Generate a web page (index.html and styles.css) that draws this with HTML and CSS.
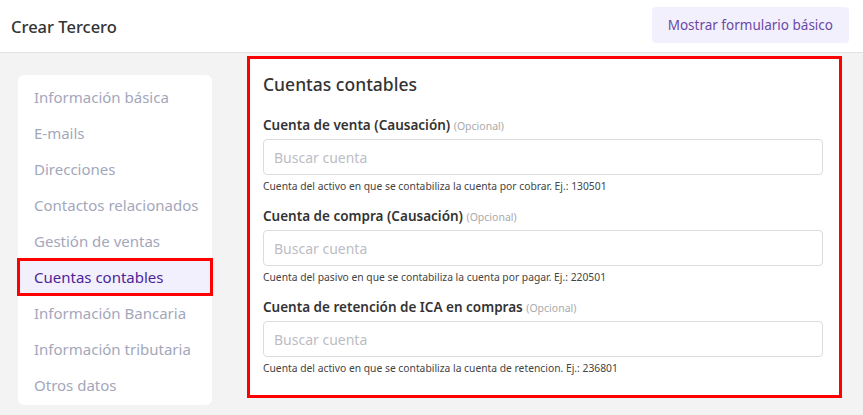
FILE: index.html
```html
<!DOCTYPE html>
<html lang="es">
<head>
    <meta charset="UTF-8">
    <title>Crear Tercero</title>
    <link rel="stylesheet" href="styles.css">
</head>
<body>
<div class="top">
    <h1 class="title">Crear Tercero</h1>
    <button class="btn-basic" type="button">Mostrar formulario básico</button>
</div>
<div class="main">
    <ul class="side">
        <li class="side-item">Información básica</li>
        <li class="side-item">E-mails</li>
        <li class="side-item">Direcciones</li>
        <li class="side-item">Contactos relacionados</li>
        <li class="side-item">Gestión de ventas</li>
        <li class="side-item active">Cuentas contables</li>
        <li class="side-item">Información Bancaria</li>
        <li class="side-item">Información tributaria</li>
        <li class="side-item">Otros datos</li>
    </ul>
    <div class="panel">
        <h2 class="panel-title">Cuentas contables</h2>

        <div class="field">
            <label class="field-label">Cuenta de venta (Causación) <span class="opt">(Opcional)</span></label>
            <input class="field-input" type="text" placeholder="Buscar cuenta">
            <div class="field-help">Cuenta del activo en que se contabiliza la cuenta por cobrar. Ej.: 130501</div>
        </div>

        <div class="field">
            <label class="field-label">Cuenta de compra (Causación) <span class="opt">(Opcional)</span></label>
            <input class="field-input" type="text" placeholder="Buscar cuenta">
            <div class="field-help">Cuenta del pasivo en que se contabiliza la cuenta por pagar. Ej.: 220501</div>
        </div>

        <div class="field">
            <label class="field-label">Cuenta de retención de ICA en compras <span class="opt">(Opcional)</span></label>
            <input class="field-input" type="text" placeholder="Buscar cuenta">
            <div class="field-help">Cuenta del activo en que se contabiliza la cuenta de retencion. Ej.: 236801</div>
        </div>
    </div><!-- class="panel" -->
</div>
</body>
</html>
```

FILE: styles.css
```css
body{
    margin:0;
    background:#f3f3f3;
    font-family:"Noto Sans","Open Sans",sans-serif;
    color:#333;
}
.top{
    height:53px;
    background:#fff;
    border-bottom:1px solid #e2e2e2;
    display:flex;
    justify-content:space-between;
    align-items:center;
    padding:0 14px 0 11px;
    box-sizing:border-box;
}
.title{
    margin:0;
    font-size:16.5px;
    font-weight:500;
    color:#333;
}
.btn-basic{
    height:36px;
    padding:0 16px;
    border:none;
    border-radius:4px;
    background:#f3f0fd;
    color:#6a4aa6;
    font-family:inherit;
    font-size:13.5px;
    margin-top:-2px;
}
.main{
    display:flex;
    align-items:flex-start;
    gap:35px;
    padding:3px 0 0 18px;
}
.side{
    list-style:none;
    margin:19px 0 0 0;
    padding:4px 0 2px 0;
    width:194px;
    background:#fff;
    border-radius:6px;
}
.side-item{
    height:36px;
    line-height:36px;
    padding-left:16px;
    font-size:15px;
    color:#a3a7bb;
}
.side-item.active{
    background:#f3f0fd;
    color:#4b2598;
    outline:3px solid #ff0000;
    outline-offset:-2px;
}
.panel{
    width:595px;
    background:#fff;
    border:3px solid #ff0000;
    padding:13px 16px 20px 13px;
    box-sizing:border-box;
}
.panel-title{
    margin:0 0 20px 0;
    font-size:17.5px;
    font-weight:500;
    color:#333;
}
.field{
    margin-bottom:14px;
}
.field:last-child{
    margin-bottom:0;
}
.field-label{
    display:block;
    font-size:13.5px;
    font-weight:600;
    color:#333;
    margin-bottom:5px;
}
.opt{
    font-size:10.5px;
    font-weight:400;
    color:#aaa;
}
.field-input{
    display:block;
    width:100%;
    height:36px;
    box-sizing:border-box;
    border:1px solid #dcdcdc;
    border-radius:4px;
    padding:0 10px;
    font-family:inherit;
    font-size:14px;
    color:#333;
}
.field-input::placeholder{
    color:#bdbdc4;
}
.field-help{
    margin-top:4px;
    font-size:10.3px;
    color:#444;
}
```
